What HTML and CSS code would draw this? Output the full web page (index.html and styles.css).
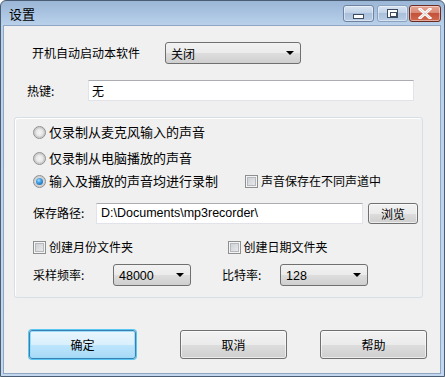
FILE: index.html
```html
<!DOCTYPE html>
<html>
<head>
<meta charset="utf-8">
<link rel="stylesheet" href="styles.css">
</head>
<body>
<div class="window">
  <div class="titlebar">
    <div class="title">设置</div>
    <div class="capbtns">
      <div class="cap cap-min"><span class="min-glyph"></span></div>
      <div class="cap cap-max"><span class="max-glyph"></span></div>
      <div class="cap cap-close">
        <svg width="14" height="11" viewBox="0 0 14 11"><path d="M2 1 L12 10 M12 1 L2 10" stroke="#fff" stroke-width="3" stroke-linecap="square"/><path d="M2 1 L12 10 M12 1 L2 10" stroke="#4a1a12" stroke-width="0.6" fill="none" opacity="0.35"/></svg>
      </div>
    </div>
  </div>
  <div class="client">
    <div class="row row-autostart">
      <span class="lbl lbl-auto">开机自动启动本软件</span>
      <div class="combo combo-auto"><span>关闭</span><i class="arrow"></i></div>
    </div>
    <div class="row row-hotkey">
      <span class="lbl lbl-hot">热键:</span>
      <div class="textbox tb-hot">无</div>
    </div>
    <div class="group">
      <div class="grow g-r1"><span class="radio"></span><span class="rtext">仅录制从麦克风输入的声音</span></div>
      <div class="grow g-r2"><span class="radio"></span><span class="rtext">仅录制从电脑播放的声音</span></div>
      <div class="grow g-r3">
        <span class="radio checked"></span><span class="rtext">输入及播放的声音均进行录制</span>
        <span class="check chk-chan"></span><span class="ctext">声音保存在不同声道中</span>
      </div>
      <div class="grow g-path">
        <span class="lbl">保存路径:</span>
        <div class="textbox tb-path">D:\Documents\mp3recorder\</div>
        <div class="btn btn-browse">浏览</div>
      </div>
      <div class="grow g-chk">
        <span class="check"></span><span class="ctext">创建月份文件夹</span>
        <span class="check chk-date"></span><span class="ctext">创建日期文件夹</span>
      </div>
      <div class="grow g-rate">
        <span class="lbl">采样频率:</span>
        <div class="combo combo-rate"><span class="num">48000</span><i class="arrow"></i></div>
        <span class="lbl lbl-bit">比特率:</span>
        <div class="combo combo-bit"><span class="num">128</span><i class="arrow"></i></div>
      </div>
    </div>
    <div class="buttons">
      <div class="btn btn-big btn-default">确定</div>
      <div class="btn btn-big btn-cancel">取消</div>
      <div class="btn btn-big btn-help">帮助</div>
    </div>
  </div>
</div>
</body>
</html>
```

FILE: styles.css
```css
* { box-sizing: border-box; }
html, body { margin: 0; padding: 0; background: #ffffff; }
body {
  font-family: "Liberation Sans", "Noto Sans CJK SC", sans-serif;
  font-size: 12px;
  color: #000;
}
.window {
  width: 445px;
  height: 377px;
  border: 1px solid #4a5d73;
  border-radius: 6px 6px 0 0;
  background: linear-gradient(#9bb6d6 0px, #a9c3e1 12px, #b9d1ea 24px, #c3d8ee 100%);
  padding: 0 3px 2px 2px;
  display: flex;
  flex-direction: column;
}
.titlebar {
  height: 24px;
  display: flex;
  align-items: flex-start;
  justify-content: space-between;
}
.title {
  font-family: "Noto Sans CJK SC", sans-serif;
  font-size: 13px;
  margin: 5px 0 0 6px;
  line-height: 16px;
  color: #000;
}
.capbtns {
  display: flex;
  margin-top: 4px;
  margin-right: 0px;
}
.cap {
  height: 17px;
  border: 1px solid #6e83a0;
  border-radius: 3px;
  display: flex;
  align-items: center;
  justify-content: center;
  box-shadow: inset 0 0 0 1px rgba(255,255,255,0.45);
}
.cap-min { width: 31px; margin-right: 3px; background: linear-gradient(#d7e3f1 0%, #c2d3e8 45%, #a9bfdb 50%, #b9cde5 100%); }
.cap-max { width: 31px; margin-right: 1px; background: linear-gradient(#d7e3f1 0%, #c2d3e8 45%, #a9bfdb 50%, #b9cde5 100%); border-color: #8ba2bf; }
.cap-close { width: 32px; background: linear-gradient(#e8a493 0%, #d98a76 45%, #c4523a 50%, #cf6a50 100%); border-color: #6b2b20; }
.min-glyph { width: 11px; height: 5px; border: 1px solid #3c4b5e; background: #fff; margin-top: 5px; }
.max-glyph { width: 11px; height: 9px; border: 1px solid #3c4b5e; background: #fff; position: relative; }
.max-glyph::after { content: ""; position: absolute; left: 2px; top: 2px; width: 5px; height: 3px; border: 1px solid #3c4b5e; }

.client {
  flex: 1;
  background: #f0f0f0;
  border: 1px solid #8fa7c3;
  position: relative;
  font-family: "Noto Sans CJK SC", sans-serif;
}
.row { display: flex; align-items: center; }
.lbl { font-family: "Noto Sans CJK SC", sans-serif; font-size: 12px; line-height: 16px; white-space: nowrap; }
.row-autostart { margin: 16px 0 0 28px; height: 22px; }
.lbl-auto { width: 133px; }
.combo {
  height: 22px;
  border: 1px solid #707070;
  border-radius: 3px;
  background: linear-gradient(#f2f2f2 0%, #ebebeb 50%, #dddddd 51%, #cfcfcf 100%);
  display: flex;
  align-items: center;
  padding-left: 5px;
  position: relative;
  font-size: 12px;
}
.combo-auto { width: 136px; }
.arrow {
  position: absolute;
  right: 6px;
  top: 8px;
  width: 0; height: 0;
  border-left: 4px solid transparent;
  border-right: 4px solid transparent;
  border-top: 4px solid #000;
}
.row-hotkey { margin: 16px 0 0 23px; height: 21px; }
.lbl-hot { width: 61px; }
.textbox {
  height: 21px;
  background: #fff;
  border: 1px solid #e2e3ea;
  border-top-color: #abadb3;
  display: flex;
  align-items: center;
  padding-left: 3px;
  font-size: 12px;
}
.tb-hot { width: 326px; }

.group {
  margin: 16px 0 0 10px;
  width: 409px;
  height: 181px;
  border: 1px solid #d5dfe5;
  border-radius: 3px;
  box-shadow: inset 1px 1px 0 #fff;
  display: flex;
  flex-direction: column;
  padding-left: 18px;
}
.grow { display: flex; align-items: center; height: 20px; }
.g-r1 { margin-top: 4px; }
.g-r2 { margin-top: 6px; }
.g-r3 { margin-top: 3px; }
.g-path { margin-top: 10px; height: 24px; }
.g-chk { margin-top: 12px; }
.g-rate { margin-top: 7px; height: 22px; }
.radio {
  width: 13px; height: 13px;
  border-radius: 50%;
  border: 1px solid #8e8f8f;
  background: radial-gradient(circle at 50% 50%, #f5f5f5 0%, #e6e6e6 45%, #c9c9c9 60%, #f4f4f4 100%);
  flex: none;
  position: relative;
}
.radio.checked::after {
  content: "";
  position: absolute;
  left: 2px; top: 2px;
  width: 7px; height: 7px;
  border-radius: 50%;
  background: radial-gradient(circle at 40% 35%, #a4dcff 0%, #3d9be0 40%, #1c5a93 100%);
}
.rtext { margin-left: 3px; font-size: 13px; line-height: 16px; white-space: nowrap; }
.g-r3 .rtext { width: 196px; }
.check {
  width: 13px; height: 13px;
  border: 1px solid #8e8f8f;
  box-shadow: inset 0 0 0 1px #f4f4f4, inset 0 0 0 2px #b5b9be;
  flex: none;
  background-image: linear-gradient(135deg, #c8ccd1 0%, #eeeeee 100%);
}
.ctext { margin-left: 3px; font-size: 12px; line-height: 16px; white-space: nowrap; }
.g-chk .ctext { width: 182px; }
.g-path .lbl { width: 63px; }
.tb-path { width: 267px; font-family: "Liberation Sans", sans-serif; font-size: 12.5px; padding-left: 4px; }
.btn {
  border: 1px solid #707070;
  border-radius: 3px;
  background: linear-gradient(#f2f2f2 0%, #ebebeb 50%, #dddddd 51%, #cfcfcf 100%);
  box-shadow: inset 0 0 0 1px rgba(255,255,255,0.6);
  display: flex;
  align-items: center;
  justify-content: center;
  font-size: 12px;
}
.btn-browse { width: 50px; height: 21px; margin-left: 5px; }
.g-rate .lbl { width: 80px; }
.combo-rate { width: 78px; }
.num { font-family: "Liberation Sans", sans-serif; font-size: 12.5px; padding-top: 1px; }
.g-rate .lbl.lbl-bit { width: 58px; margin-left: 31px; }
.combo-bit { width: 88px; }

.buttons { display: flex; margin: 32px 0 0 25px; }
.btn-big { width: 107px; height: 29px; }
.btn-cancel { margin-left: 44px; }
.btn-help { margin-left: 33px; }
.btn-default {
  border-color: #3c7fb1;
  background: linear-gradient(#eaf6fd 0%, #d9f0fc 50%, #bee6fd 51%, #a7d9f5 100%);
  box-shadow: 0 0 0 1px #58c6f2, inset 0 0 0 1px #9ddcf9;
}
```
